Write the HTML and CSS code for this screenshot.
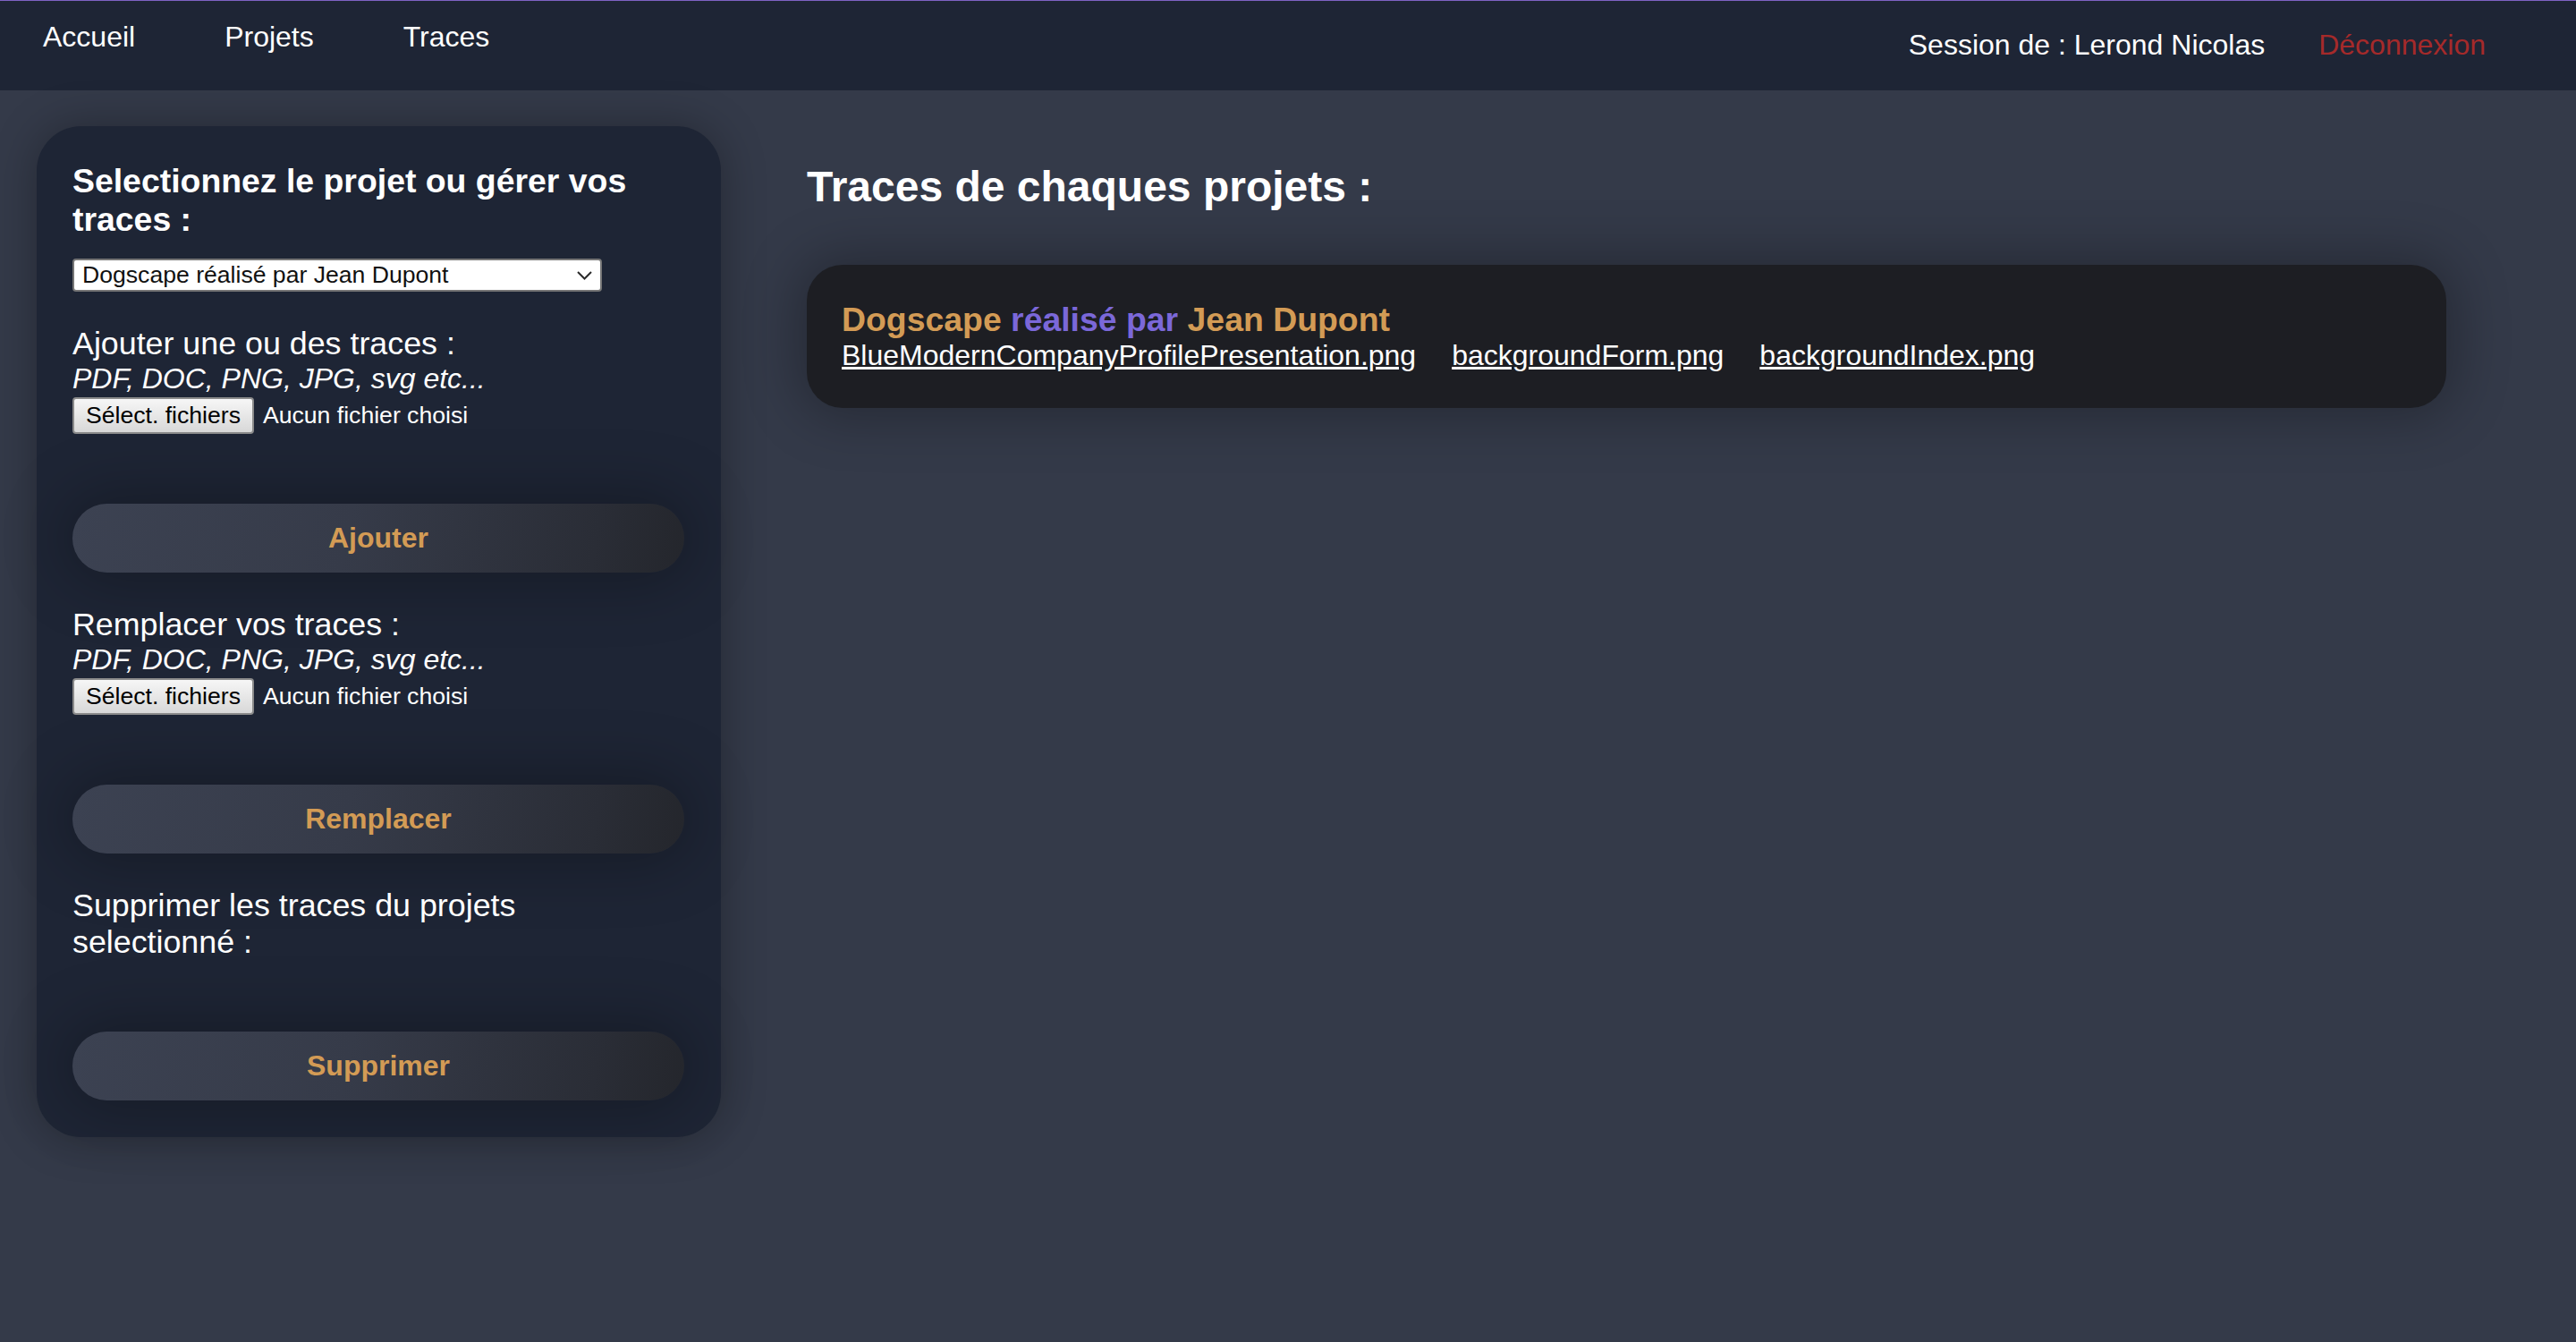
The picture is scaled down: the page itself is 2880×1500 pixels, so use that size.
FILE: index.html
```html
<!DOCTYPE html>
<html lang="fr">
<head>
<meta charset="utf-8">
<title>Traces</title>
<link rel="stylesheet" href="styles.css">
</head>
<body>
<nav class="topbar">
  <ul class="nav-left">
    <li><a href="#">Accueil</a></li>
    <li><a href="#">Projets</a></li>
    <li><a href="#">Traces</a></li>
  </ul>
  <div class="nav-right">
    <span class="session">Session de : Lerond Nicolas</span>
    <a href="#" class="logout">Déconnexion</a>
  </div>
</nav>
<main class="layout">
  <aside class="panel">
    <h3 class="panel-title">Selectionnez le projet ou gérer vos traces :</h3>
    <div class="select-box">
      <span>Dogscape réalisé par Jean Dupont</span>
      <svg class="chevron" width="17" height="10" viewBox="0 0 17 10"><polyline points="1,1 8.5,8.5 16,1" fill="none" stroke="#2b2b2b" stroke-width="2"/></svg>
    </div>

    <div class="section">
      <div class="section-label">Ajouter une ou des traces :</div>
      <div class="formats">PDF, DOC, PNG, JPG, svg etc...</div>
      <div class="file-row"><span class="file-btn">Sélect. fichiers</span><span class="file-none">Aucun fichier choisi</span></div>
      <button class="action">Ajouter</button>
    </div>

    <div class="section">
      <div class="section-label">Remplacer vos traces :</div>
      <div class="formats">PDF, DOC, PNG, JPG, svg etc...</div>
      <div class="file-row"><span class="file-btn">Sélect. fichiers</span><span class="file-none">Aucun fichier choisi</span></div>
      <button class="action">Remplacer</button>
    </div>

    <div class="section">
      <div class="section-label">Supprimer les traces du projets selectionné :</div>
      <button class="action">Supprimer</button>
    </div>
  </aside>

  <section class="traces">
    <h2 class="traces-title">Traces de chaques projets :</h2>
    <article class="project-card">
      <h3 class="project-name"><span class="gold">Dogscape</span> <span class="violet">réalisé par</span> <span class="gold">Jean Dupont</span></h3>
      <div class="files">
        <a href="#">BlueModernCompanyProfilePresentation.png</a>
        <a href="#">backgroundForm.png</a>
        <a href="#">backgroundIndex.png</a>
      </div>
    </article>
  </section>
</main>
</body>
</html>
```
FILE: styles.css
```css
html, body {
  margin: 0;
  padding: 0;
}
body {
  min-height: 1500px;
  background: #343a49;
  font-family: "Liberation Sans", Arial, sans-serif;
  color: #ffffff;
}

/* top bar */
.topbar {
  display: flex;
  justify-content: space-between;
  align-items: flex-start;
  height: 100px;
  border-top: 1px solid #7f63c4;
  background: #1e2535;
}
.nav-left {
  display: flex;
  gap: 100px;
  list-style: none;
  margin: 0;
  padding: 22px 0 0 48px;
}
.nav-left a {
  color: #ffffff;
  text-decoration: none;
  font-size: 32px;
  line-height: normal;
}
.nav-right {
  display: flex;
  gap: 60px;
  padding: 31px 101px 0 0;
  font-size: 32px;
}
.session { color: #ffffff; }
.logout {
  color: #a52a2a;
  text-decoration: none;
}

/* layout */
.layout {
  display: flex;
  align-items: flex-start;
  padding: 40px 145px 40px 41px;
}

/* left panel */
.panel {
  width: 765px;
  box-sizing: border-box;
  flex: none;
  padding: 40px 41px 41px 40px;
  background: #1e2535;
  border-radius: 50px;
  box-shadow: 0 0 50px rgba(0, 0, 0, 0.3);
}
.panel-title {
  margin: 0;
  font-size: 37.4px;
  font-weight: bold;
  line-height: normal;
}
.select-box {
  display: flex;
  align-items: center;
  justify-content: space-between;
  width: 592px;
  height: 37px;
  box-sizing: border-box;
  margin-top: 22px;
  padding: 0 9px 0 9px;
  background: #ffffff;
  border: 2px solid #767676;
  border-radius: 4px;
  color: #111111;
  font-size: 26.6px;
}
.chevron { flex: none; }

.section { margin-top: 38px; }
.section-label {
  font-size: 35.8px;
  line-height: normal;
}
.formats {
  font-size: 32px;
  font-style: italic;
  line-height: normal;
}
.file-row {
  display: flex;
  align-items: center;
  margin-top: 2px;
  font-size: 26.6px;
}
.file-btn {
  display: flex;
  align-items: center;
  justify-content: center;
  width: 203px;
  height: 41px;
  box-sizing: border-box;
  border: 2px solid #8a8a8a;
  border-radius: 4px;
  background: linear-gradient(#f6f6f6, #d8d8d8);
  color: #000000;
}
.file-none {
  margin-left: 10px;
  color: #ffffff;
}
.action {
  display: block;
  width: 100%;
  height: 77px;
  margin-top: 78px;
  border: none;
  border-radius: 40px;
  background: linear-gradient(100deg, #3c4252 0%, #363b49 45%, #2a2d36 85%, #24262c 100%);
  box-shadow: 0 0 70px 10px rgba(0, 0, 0, 0.28);
  color: #d39b55;
  font-family: "Liberation Sans", Arial, sans-serif;
  font-size: 32px;
  font-weight: bold;
}
.section:last-child .action { margin-top: 79px; }

/* traces section */
.traces {
  flex: 1;
  margin-left: 96px;
}
.traces-title {
  margin: 40px 0 60px;
  font-size: 48px;
  font-weight: bold;
  line-height: normal;
}
.project-card {
  padding: 40px 40px 40px 39px;
  background: #1d1e23;
  border-radius: 40px;
  box-shadow: 0 0 60px 10px rgba(0, 0, 0, 0.28);
}
.project-name {
  margin: 0;
  font-size: 37.4px;
  font-weight: bold;
  line-height: normal;
}
.gold { color: #d39b55; }
.violet { color: #7b68d9; }
.files {
  display: flex;
  gap: 40px;
  font-size: 32px;
  line-height: normal;
}
.files a {
  color: #ffffff;
  text-decoration: underline;
}
```
